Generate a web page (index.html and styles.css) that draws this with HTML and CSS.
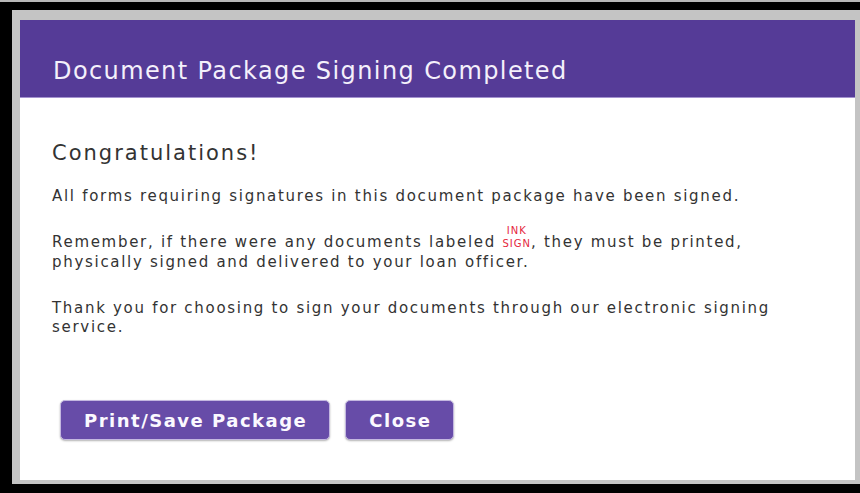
FILE: index.html
```html
<!DOCTYPE html>
<html lang="en">
<head>
<meta charset="utf-8">
<title>Document Package Signing Completed</title>
<link rel="stylesheet" href="styles.css">
</head>
<body>
<div class="screen">
  <div class="dialog">
    <div class="dialog-header">
      <h1 class="dialog-title">Document Package Signing Completed</h1>
    </div>
    <div class="dialog-body">
      <h2 class="greeting">Congratulations!</h2>
      <p class="msg">All forms requiring signatures in this document package have been signed.</p>
      <p class="msg">Remember, if there were any documents labeled <span class="ink-sign"><span class="ink-top">INK</span>SIGN</span>, they must be printed, physically signed and delivered to your loan officer.</p>
      <p class="msg">Thank you for choosing to sign your documents through our electronic signing service.</p>
      <div class="actions">
        <button class="btn" type="button">Print/Save Package</button>
        <button class="btn" type="button">Close</button>
      </div>
    </div>
  </div>
</div>
</body>
</html>
```
FILE: styles.css
```css
html, body {
  margin: 0;
  padding: 0;
  background: #000;
  height: 100%;
  overflow: hidden;
}

.screen {
  border-top: 2px solid #b8b8b8;
  padding: 8px 0 0 12px;
  height: 100%;
  box-sizing: border-box;
}

.dialog {
  width: 848px;
  box-sizing: border-box;
  border-style: solid;
  border-color: #c4c4c4;
  border-width: 10px 5px 4px 8px;
  background: #fff;
  font-family: "DejaVu Sans", Verdana, sans-serif;
}

.dialog-header {
  background: #553b97;
  height: 78px;
  padding: 37px 33px 0;
  border-bottom: 1px solid #a392cf;
  box-sizing: border-box;
}

.dialog-title {
  margin: 0;
  color: #f4f0fb;
  font-weight: normal;
  font-size: 24px;
  line-height: 28px;
  letter-spacing: 1.4px;
}

.dialog-body {
  width: 740px;
  padding: 43px 63px 40px 32px;
  color: #333;
}

.greeting {
  margin: 0 0 22px;
  font-weight: normal;
  font-size: 21px;
  line-height: 24px;
  letter-spacing: 2px;
  color: #333;
}

.msg {
  margin: 0 0 27px;
  font-size: 15px;
  line-height: 19px;
  letter-spacing: 1.7px;
}

/* stacked red "INK / SIGN" label inside the sentence */
.ink-sign {
  position: relative;
  font-size: 10px;
  letter-spacing: 1px;
  color: #e5283e;
}

.ink-top {
  position: absolute;
  left: 0;
  right: 0;
  bottom: 9px;
  text-align: center;
}

.actions {
  display: flex;
  gap: 15px;
  padding: 36px 0 0 8px;
}

.btn {
  font-family: "DejaVu Sans", Verdana, sans-serif;
  font-weight: bold;
  font-size: 18px;
  letter-spacing: 1.5px;
  color: #fbf9ff;
  background: #674ca8;
  border: 1px solid #c4b8e0;
  border-radius: 5px;
  height: 40px;
  padding: 0 22px 0 23px;
  box-shadow: 0 1px 2px rgba(0, 0, 0, 0.3);
}
```
